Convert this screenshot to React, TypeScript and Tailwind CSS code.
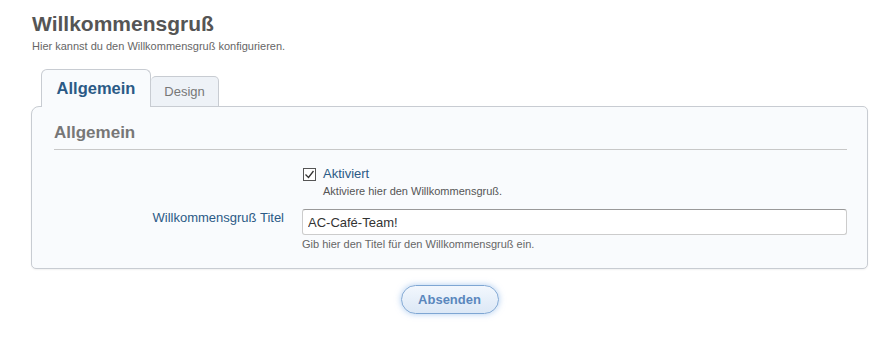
import React, { useState } from 'react';

const font = { fontFamily: '"Liberation Sans", Arial, sans-serif' };

export default function App() {
  const [active, setActive] = useState(true);
  const [title, setTitle] = useState('AC-Café-Team!');

  return (
    <div className="w-[885px] h-[346px] bg-white pl-[31px] pt-[10px]" style={font}>
      <h1 className="pl-[1px] text-[21px] leading-[28px] font-bold text-[#555]">Willkommensgruß</h1>
      <p className="pl-[1px] mt-[1px] text-[11px] leading-[14px] text-[#666]">Hier kannst du den Willkommensgruß konfigurieren.</p>

      <div className="mt-[16px] flex items-end pl-[10px] h-[38px] relative z-10">
        <div className="w-[110px] h-[38px] rounded-t-[6px] border border-b-0 border-[#c8ccd2] bg-[#f9fbfd] flex items-center justify-center text-[16.5px] font-bold text-[#2b5a86]">
          Allgemein
        </div>
        <div className="w-[68px] h-[31px] rounded-t-[5px] border border-l-0 border-[#c8ccd2] bg-[#eef2f7] flex items-center justify-center text-[13px] text-[#777]">
          Design
        </div>
      </div>

      <div className="-mt-[1px] w-[837px] h-[163px] rounded-[5px] rounded-tl-[8px] border border-[#c8ccd2] bg-[#f9fbfd] shadow-[0_1px_2px_rgba(0,0,0,0.06)] pl-[22px] pr-[20px] pt-[15px]">
        <h2 className="text-[17px] leading-[22px] font-bold text-[#777]">Allgemein</h2>
        <div className="mt-[5px] h-px bg-[#c8c8c8]" />

        <div className="mt-[16px] flex">
          <div className="w-[248px] shrink-0" />
          <div className="ml-[1px]">
            <label className="flex items-center gap-[7px] cursor-pointer">
              <span
                onClick={() => setActive(!active)}
                className="w-[13px] h-[13px] border border-[#555] bg-white flex items-center justify-center"
              >
                {active && (
                  <svg width="11" height="11" viewBox="0 0 11 11">
                    <path d="M1.5 5.5 L4.5 8.5 L9.5 2" fill="none" stroke="#333" strokeWidth="1.3" />
                  </svg>
                )}
              </span>
              <span className="text-[13px] leading-[16px] text-[#2b5a86]">Aktiviert</span>
            </label>
            <p className="ml-[20px] mt-[2px] text-[11px] leading-[15px] text-[#555]">Aktiviere hier den Willkommensgruß.</p>
          </div>
        </div>

        <div className="mt-[10px] flex">
          <div className="w-[230px] shrink-0 text-right pt-[1px] text-[13px] leading-[16px] text-[#2b5a86]">
            Willkommensgruß Titel
          </div>
          <div className="ml-[18px] flex-1">
            <input
              value={title}
              onChange={(e) => setTitle(e.target.value)}
              className="w-full h-[26px] rounded-[3px] border border-[#ccc] border-t-[#999] bg-white px-[5px] text-[13px] text-[#333] outline-none"
            />
            <p className="mt-[2px] text-[11px] leading-[15px] text-[#666]">Gib hier den Titel für den Willkommensgruß ein.</p>
          </div>
        </div>
      </div>

      <div className="mt-[16px] w-[837px] flex justify-center">
        <button className="w-[98px] h-[29px] rounded-full border border-[#7ea6d3] bg-gradient-to-b from-[#f2f7fd] to-[#dce8f6] shadow-[0_0_6px_rgba(120,170,230,0.6)] text-[13px] font-bold text-[#5a87bd]">
          Absenden
        </button>
      </div>
    </div>
  );
}
